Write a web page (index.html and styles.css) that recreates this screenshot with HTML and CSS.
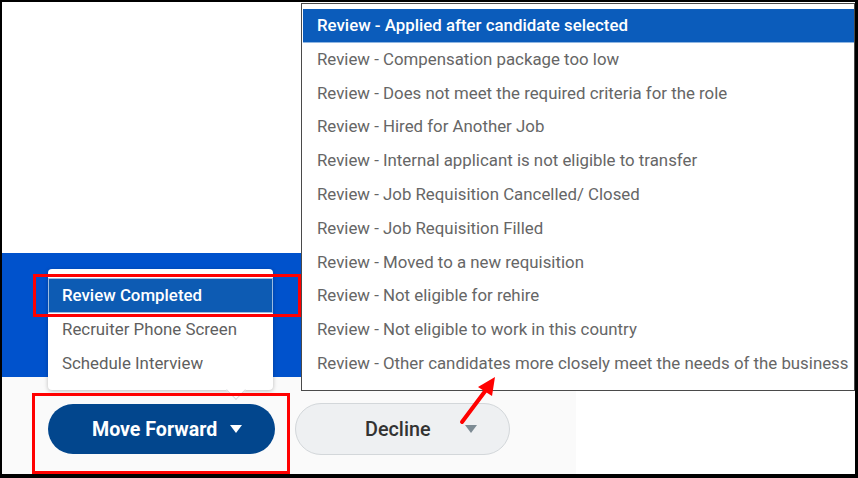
FILE: index.html
```html
<!DOCTYPE html>
<html>
<head>
<meta charset="utf-8">
<link rel="stylesheet" href="styles.css">
</head>
<body>
<div class="frame">
  <div class="top"></div>
  <div class="band"></div>
  <div class="footer">
    <div class="footer-bg">
      <button class="btn-primary">
        <span>Move Forward</span>
        <svg class="caret" width="12" height="8" viewBox="0 0 12 8"><path d="M0 0H12L6 8Z" fill="#fff"/></svg>
      </button>
      <button class="btn-secondary">
        <span>Decline</span>
        <svg class="caret" width="12" height="8" viewBox="0 0 12 8"><path d="M0 0H12L6 8Z" fill="#7d8b94"/></svg>
      </button>
    </div>
  </div>

  <div class="menu">
    <div class="menu-item active">Review Completed</div>
    <div class="menu-item">Recruiter Phone Screen</div>
    <div class="menu-item">Schedule Interview</div>
  </div>

  <div class="dropdown">
    <div class="dd-item selected">Review - Applied after candidate selected</div>
    <div class="dd-item">Review - Compensation package too low</div>
    <div class="dd-item">Review - Does not meet the required criteria for the role</div>
    <div class="dd-item">Review - Hired for Another Job</div>
    <div class="dd-item">Review - Internal applicant is not eligible to transfer</div>
    <div class="dd-item">Review - Job Requisition Cancelled/ Closed</div>
    <div class="dd-item">Review - Job Requisition Filled</div>
    <div class="dd-item">Review - Moved to a new requisition</div>
    <div class="dd-item">Review - Not eligible for rehire</div>
    <div class="dd-item">Review - Not eligible to work in this country</div>
    <div class="dd-item">Review - Other candidates more closely meet the needs of the business</div>
  </div>

  <div class="hl hl-menu"></div>
  <div class="hl hl-button"></div>

  <svg class="red-arrow" width="50" height="56" viewBox="0 0 50 56">
    <line x1="6" y1="48" x2="30" y2="16" stroke="#f00" stroke-width="4" stroke-linecap="round"/>
    <polygon points="39,3 36,22 22,13" fill="#f00"/>
  </svg>
</div>
</body>
</html>
```

FILE: styles.css
```css
* { box-sizing: border-box; }

html, body {
  margin: 0;
  padding: 0;
  background: #fff;
  font-family: Roboto, "Liberation Sans", Arial, sans-serif;
}

.frame {
  position: relative;
  width: 858px;
  height: 478px;
  border-style: solid;
  border-color: #000;
  border-width: 2px 3px 4px 2px;
  display: flex;
  flex-direction: column;
  overflow: hidden;
}

.top {
  height: 251px;
  background: #fff;
}

.band {
  height: 124px;
  background: #0052cc;
}

.footer {
  flex: 1;
  display: flex;
  background: #fff;
}

.footer-bg {
  width: 574px;
  background: #fafafa;
  display: flex;
  align-items: flex-start;
  gap: 20px;
  padding: 27px 0 0 46px;
}

.btn-primary {
  width: 227px;
  height: 50px;
  border: none;
  border-radius: 25px;
  background: #02468d;
  color: #fff;
  font-family: Roboto, "Liberation Sans", Arial, sans-serif;
  font-size: 19.6px;
  font-weight: 700;
  display: flex;
  align-items: center;
  padding: 0 0 0 44px;
  gap: 13px;
  cursor: pointer;
}

.btn-secondary {
  width: 215px;
  height: 52px;
  margin-top: -1px;
  border: 1px solid #d3d7da;
  border-radius: 26px;
  background: #eef0f2;
  color: #333;
  font-family: Roboto, "Liberation Sans", Arial, sans-serif;
  font-size: 19.8px;
  font-weight: 500;
  display: flex;
  align-items: center;
  padding: 0 0 0 69px;
  gap: 34px;
}

.caret { display: block; flex: none; }

.menu {
  position: absolute;
  left: 46px;
  top: 267px;
  width: 225px;
  height: 121px;
  background: #fff;
  border-radius: 4px;
  box-shadow: 0 1px 4px rgba(0, 0, 0, 0.25);
  padding-top: 9px;
}

.menu::after {
  content: "";
  position: absolute;
  left: 181px;
  bottom: -7px;
  width: 13px;
  height: 13px;
  background: #fff;
  border-right: 1px solid #d8dadc;
  border-bottom: 1px solid #d8dadc;
  transform: rotate(45deg);
}

.menu-item {
  height: 33.5px;
  line-height: 33px;
  padding-left: 14px;
  font-size: 16.85px;
  color: #5f5f5f;
}

.menu-item.active {
  height: 35px;
  line-height: 33px;
  background: #0d5bb3;
  border: 1px solid #9dbbe0;
  padding-left: 13px;
  color: #fff;
  font-weight: 500;
}

.dropdown {
  position: absolute;
  left: 299px;
  top: 1px;
  width: 554px;
  height: 388px;
  background: #fff;
  border: 1px solid #4a4a4a;
  padding: 5px 0 0 1px;
}

.dd-item {
  height: 33.8px;
  line-height: 33.8px;
  padding-left: 14px;
  font-size: 16.83px;
  color: #666;
  white-space: nowrap;
}

.dd-item.selected {
  background: #0b5cbb;
  border-bottom: 1px solid #8fb6e2;
  line-height: 32.8px;
  color: #fff;
  font-weight: 500;
}

.hl {
  position: absolute;
  border: 3px solid #f00;
}

.hl-menu {
  left: 31px;
  top: 272px;
  width: 268px;
  height: 43px;
}

.hl-button {
  left: 30px;
  top: 391px;
  width: 258px;
  height: 81px;
}

.red-arrow {
  position: absolute;
  left: 454px;
  top: 372px;
}
```
